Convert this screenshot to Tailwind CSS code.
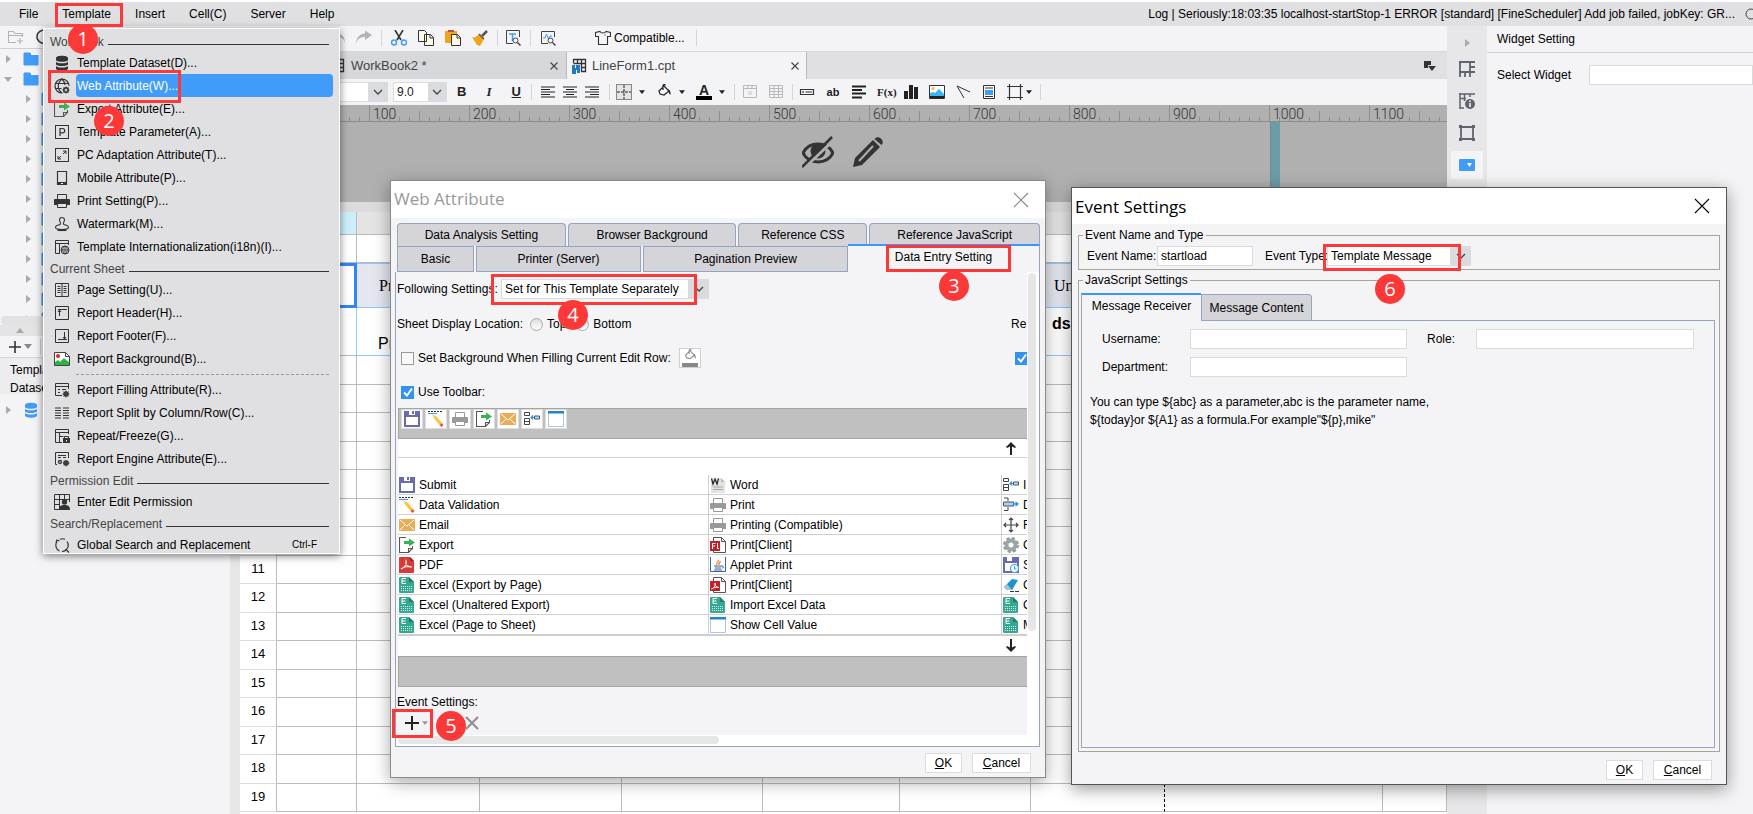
<!DOCTYPE html>
<html lang="en">
<head>
    <meta charset="UTF-8">
    <meta name="viewport" content="width=device-width, initial-scale=1.0">
    <title>Report Designer</title>
    <script src="https://cdn.jsdelivr.net/npm/@tailwindcss/browser@4"></script>
</head>
<body class="relative flex h-screen flex-col overflow-hidden bg-[#f4f4f6] font-['Liberation_Sans',Arial,sans-serif] text-xs text-black">

    <!-- Icon sprite -->
    <svg class="hidden" xmlns="http://www.w3.org/2000/svg">
        <symbol id="tri-right" viewBox="0 0 6 8"><path d="M1 0l5 4-5 4z" fill="#aaa"/></symbol>
        <symbol id="tri-down" viewBox="0 0 8 5"><path d="M0 0h8L4 5z" fill="currentColor"/></symbol>
        <symbol id="chevron" viewBox="0 0 10 6"><path d="M1 1l4 4 4-4" fill="none" stroke="#444" stroke-width="1.3"/></symbol>
        <symbol id="close" viewBox="0 0 16 16"><path d="M1 1l14 14M15 1L1 15" fill="none" stroke="currentColor" stroke-width="1.1"/></symbol>
        <symbol id="close-sm" viewBox="0 0 8 8"><path d="M.5.5l7 7M7.500.5l-7 7" fill="none" stroke="#444" stroke-width="1.1"/></symbol>
        <symbol id="folder" viewBox="0 0 16 14"><path d="M1 1h6l2 2h6v10H1z" fill="#419bf9" stroke="#419bf9" stroke-linejoin="round"/><path d="M8 2.500h7" stroke="#fff"/></symbol>
        <symbol id="db" viewBox="0 0 16 16"><path d="M2 3c0-3 12-3 12 0v2c0 2.400-12 2.400-12 0zM2 6.800c2 2 10 2 12 0v2.400c0 2.400-12 2.400-12 0zM2 11c2 2 10 2 12 0v2.400c0 3-12 3-12 0z" fill="currentColor"/></symbol>
        <symbol id="globe-gear" viewBox="0 0 16 16"><g fill="none" stroke="#333" stroke-width="1.200"><path d="M8.500 15A7 7 0 1 1 15 8M8 1c-5 4-5 10 0 14M8 1c2 2 3 4 3 6M1.500 5.500h13M1.500 10.500h6"/><circle cx="12" cy="12" r="2.300" stroke-width="1.500"/><path d="M12 8.300v7.400M8.300 12h7.400M9.500 9.500l5 5M14.500 9.500l-5 5" stroke-width=".8"/></g><circle cx="12" cy="12" r="1.100" fill="#e0e0e2"/></symbol>
        <symbol id="export" viewBox="0 0 16 16"><path d="M7 .5H.5v15h9l4-4V9M9.500 15.500v-4h4" fill="none" stroke="#555" stroke-width="1.100"/><path d="M5 4h5V1.500l6 4-6 4V7H5z" fill="#3cb054"/></symbol>
        <symbol id="param" viewBox="0 0 16 16"><rect x="1.500" y="1.500" width="13" height="13" fill="none" stroke="#333"/><path d="M6 12V4.500h2.500a2.200 2.200 0 0 1 0 4.400H6" fill="none" stroke="#333" stroke-width="1.200"/></symbol>
        <symbol id="adapt" viewBox="0 0 16 16"><rect x="1.500" y="1.500" width="13" height="13" fill="none" stroke="#333"/><path d="M9 4h3v3M12 4L9 7M4 9v3h3M4 12l3-3" fill="none" stroke="#333"/></symbol>
        <symbol id="mobile" viewBox="0 0 16 16"><path d="M3.500 1.500h9v13h-9z" fill="none" stroke="#333" stroke-width="1.200"/><path d="M3 12h10v3H3z" fill="#333"/><path d="M7 13.500h2" stroke="#fff"/></symbol>
        <symbol id="print" viewBox="0 0 16 16"><path d="M3.500 6V1.500h9V6M3.500 11v3.500h9V11" fill="none" stroke="currentColor"/><path d="M1 6h14a1 1 0 0 1 1 1v5h-3v-1H3v1H0V7a1 1 0 0 1 1-1z" fill="currentColor"/></symbol>
        <symbol id="stamp" viewBox="0 0 16 16"><g fill="none" stroke="#333" stroke-width="1.100"><path d="M6.500 8.500C7 6.500 5.500 5.500 5.500 4a2.500 2.500 0 0 1 5 0c0 1.500-1.500 2.500-1 4.500"/><path d="M6.500 8.500C3 9 1.500 10 1.500 11.500c0 1.300 3 2 6.500 2s6.500-.7 6.500-2c0-1.500-1.500-2.500-5-3"/><path d="M3.500 14.500h9"/></g></symbol>
        <symbol id="i18n" viewBox="0 0 16 16"><g fill="none" stroke="#333"><path d="M6 14.500H1.500v-13h13V6M1.500 4.500h13M5.500 4.500v10"/><circle cx="11" cy="11" r="4"/><path d="M7 11h8M11 7v8M11 7c-3 2-3 6 0 8M11 7c3 2 3 6 0 8" stroke-width=".8"/></g></symbol>
        <symbol id="page" viewBox="0 0 16 16"><path d="M1.500 1.500h13v13h-13zM8 2v12M3.500 4.500h3M3.500 6.500h3M3.500 8.500h3M3.500 10.500h3M9.500 4.500h3M9.500 6.500h3M9.500 8.500h3M9.500 10.500h3" fill="none" stroke="#333"/></symbol>
        <symbol id="head" viewBox="0 0 16 16"><path d="M1.500 1.500h13v13h-13zM4 4.500h9M5.500 5v6M4 7l1.500-2L7 7" fill="none" stroke="#333"/></symbol>
        <symbol id="foot" viewBox="0 0 16 16"><path d="M1.500 1.500h13v13h-13zM4 11.500h9M10.500 4v7M9 9l1.500 2L12 9" fill="none" stroke="#333"/></symbol>
        <symbol id="bgimg" viewBox="0 0 16 16"><path d="M.5 1.500h11l4 4v9H.5z" fill="#fff" stroke="#444"/><path d="M1 14v-3l3-2 2 2 4-4 2 2 3 2v3z" fill="#2fb344"/><circle cx="4" cy="5" r="2" fill="#e22"/><path d="M11.500 1.500v4h4" fill="none" stroke="#444"/></symbol>
        <symbol id="fill-attr" viewBox="0 0 16 16"><g fill="none" stroke="#333"><path d="M8 13.500H1.500v-12h13V7M1.500 4.500h13M4 7.500h2M8 7.500h4M4 10.500h2"/><circle cx="12" cy="12" r="2" stroke-width="1.500"/><path d="M12 8.500v7M8.500 12h7M9.500 9.500l5 5M14.500 9.500l-5 5" stroke-width=".8"/></g></symbol>
        <symbol id="split" viewBox="0 0 16 16"><path d="M1 3h6M1 5.500h6M1 8h6M1 10.500h6M1 13h6M9 3h6M9 5.500h6M9 8h6M9 10.500h6M9 13h6" stroke="#333" stroke-width="1.100"/></symbol>
        <symbol id="freeze" viewBox="0 0 16 16"><path d="M8 14.500H1.500v-13h13V6M1.500 4.500h13M5.500 4.500v10M5.500 8.500h4" fill="none" stroke="#333"/><path d="M9 10h7v5H9z" fill="#333"/><path d="M10.500 10V8.500h4V10" fill="none" stroke="#333"/><path d="M12 12h1v1.500h-1z" fill="#fff"/></symbol>
        <symbol id="engine" viewBox="0 0 16 16"><g fill="none" stroke="#333"><path d="M3 13.500H1.500v-12h13V7M4 4.500h8M4 6.500h3M9 6.500h3"/><circle cx="6" cy="11" r="1.500" stroke-width="1.300"/><circle cx="12" cy="12" r="2" stroke-width="1.500"/><path d="M12 9v6.500M8.800 12h6.700M9.800 9.800l4.500 4.500M14.300 9.800l-4.500 4.500" stroke-width=".8"/></g></symbol>
        <symbol id="perm" viewBox="0 0 16 16"><path d="M5 15.500H.5V.5h15V8M.5 5.500h15M.5 10.500H6M5.500.5v15M10.500.5v5" fill="none" stroke="#333"/><circle cx="10.500" cy="8" r="2.700" fill="#333"/><path d="M5 16c0-4 2-5 5.500-5S16 12 16 16z" fill="#333"/></symbol>
        <symbol id="search-rep" viewBox="0 0 16 16"><path d="M5.500 14A6.300 6.300 0 0 1 3 4.500M6 2.300a6.300 6.300 0 0 1 5 0M13 4.500a6.300 6.300 0 0 1-1 8.500 6.300 6.300 0 0 1-4 1.500M2 5.500l1-2.500 2.500 1M11.500 12l3.500 3.500" fill="none" stroke="#333" stroke-width="1.200"/></symbol>
        <symbol id="bucket" viewBox="0 0 16 16"><path d="M3 7l5-5 5 5-5 4-4-1zM7 6V1.500a1.300 1.300 0 0 1 2.500 0" fill="none" stroke="currentColor" stroke-width="1.200"/><path d="M12 5c2 1 3 3 2.500 6-1-1-2-2-2-4z" fill="currentColor"/></symbol>
        <symbol id="save" viewBox="0 0 16 16"><path d="M0 0h16v16H0z" fill="#6a6aae"/><path d="M2 6h12v8H2z" fill="#fff"/><path d="M5 0h6v4H5z" fill="#fff"/><path d="M8 0h2v3H8z" fill="#6a6aae"/></symbol>
        <symbol id="save-clock" viewBox="0 0 16 16"><path d="M0 0h16v16H0z" fill="#6a6aae"/><path d="M2 6h12v8H2zM4 0h5v4H4z" fill="#fff"/><circle cx="11.500" cy="11.500" r="4" fill="#fff" stroke="#419bf9" stroke-width="1.200"/><path d="M11.500 9v3h2" fill="none" stroke="#419bf9"/></symbol>
        <symbol id="validate" viewBox="0 0 16 16"><path d="M0 .5h15" stroke="#333" stroke-dasharray="2 1"/><path d="M0 2.500h9" stroke="#419bf9"/><path d="M5 6l2.500-1.500L14 12l-2.500 2z" fill="#fdc33c"/><path d="M4 3l3.500 1.500L5 6.500z" fill="#f0d9b0"/><path d="M11.500 14l2.500-2 1.500 2-2 2z" fill="#e8503a"/></symbol>
        <symbol id="mail" viewBox="0 0 16 16"><rect y="2" width="16" height="12" rx="1" fill="#eaad55"/><path d="M1 3l7 6 7-6M1 13l5-5M15 13l-5-5" fill="none" stroke="#fff"/></symbol>
        <symbol id="insert" viewBox="0 0 16 16"><path d="M.5 1.500h5v3h-5zM.5 7.500h5v6h-5zM.5 10.500h5" fill="#fff" stroke="#444"/><path d="M7 6.500h4M9 4.500L7 6.500l2 2" fill="none" stroke="#2f8ff0" stroke-width="1.200"/><path d="M10.500 5h5v3h-5z" fill="#bfe0f8" stroke="#456"/></symbol>
        <symbol id="delete" viewBox="0 0 16 16"><path d="M1 1h4v3M1 13.500h4V10" fill="none" stroke="#444"/><path d="M.5 5h10v4H.5z" fill="#a9d3f2" stroke="#456"/><path d="M10 7h5M12.500 5l2.500 2-2.500 2" fill="none" stroke="#2f8ff0" stroke-width="1.300"/></symbol>
        <symbol id="window" viewBox="0 0 16 16"><path d="M.5.5h15v15H.5z" fill="#fff" stroke="#a9c6e2"/><path d="M0 0h16v2.500H0z" fill="#1d86c8"/></symbol>
        <symbol id="pdf" viewBox="0 0 16 16"><path d="M0 1a1 1 0 0 1 1-1h10l4 4v11a1 1 0 0 1-1 1H0z" fill="#d83b35"/><path d="M11 0v4h4z" fill="#a52520"/><path d="M2 12c4-2 6-5 5-8-1 4 2 6 6 6-4-1-8 0-11 2z" fill="none" stroke="#fff" stroke-width="1.100"/></symbol>
        <symbol id="excel" viewBox="0 0 16 16"><path d="M0 1a1 1 0 0 1 1-1h9l5 5v10a1 1 0 0 1-1 1H1a1 1 0 0 1-1-1z" fill="#35a98f"/><path d="M10 0v5h5z" fill="#237e69"/><path d="M7 1.500H3v5h4M3 4h3.500" fill="none" stroke="#fff"/><path d="M2 9.500h11M2 11.500h11M2 13.500h11" stroke="#fff" stroke-opacity=".8" stroke-dasharray="1 1"/></symbol>
        <symbol id="word" viewBox="0 0 16 16"><path d="M1 1h10l4 4v11H1z" fill="#e2e2e2"/><path d="M11 1v4h4z" fill="#bbb"/><path d="M1.500 1.500L3 7l2-5 2 5 1.500-5.500" fill="none" stroke="#222" stroke-width="1.200"/><path d="M3 10h10M3 12.500h10" stroke="#aaa"/></symbol>
        <symbol id="flash" viewBox="0 0 16 16"><path d="M3.500 4V.5h8l4 4v11h-12V13M11.500.5v4h4" fill="#fff" stroke="#555"/><path d="M0 4h10v10H0z" fill="#c62127"/><path d="M5.500 6.500H2.500V12M2.500 9H5M7.500 6v5.500H9" fill="none" stroke="#fff"/></symbol>
        <symbol id="pdf-print" viewBox="0 0 16 16"><path d="M3.500 4V.5h8l4 4v11h-12V13M11.500.5v4h4" fill="#fff" stroke="#555"/><path d="M0 4h10v10H0z" fill="#c62127"/><path d="M1.500 12c3-1 4-3 3.500-6 0 3 1 4 4 4.500-3-.5-5 0-7.500 1.500z" fill="none" stroke="#fff" stroke-width=".9"/></symbol>
        <symbol id="java" viewBox="0 0 16 16"><path d="M.5 0v14.500h15V0" fill="none" stroke="#35639a"/><path d="M7 8c-2-2 3-3 1-5M9 8c-1-2 2-2 1-4" fill="none" stroke="#ef7d22" stroke-width="1.200"/><path d="M4 9h8M5 11h6M4 13h8M12 9c2 0 2 2 0 2" fill="none" stroke="#35639a"/></symbol>
        <symbol id="move" viewBox="0 0 16 16"><path d="M8 1v14M1 8h14M6 3l2-2 2 2M6 13l2 2 2-2M3 6L1 8l2 2M13 6l2 2-2 2" fill="none" stroke="#444" stroke-width="1.200"/></symbol>
        <symbol id="gear" viewBox="0 0 16 16"><circle cx="8" cy="8" r="6.500" fill="none" stroke="#8e9b98" stroke-width="3" stroke-dasharray="3 2.100"/><circle cx="8" cy="8" r="4.500" fill="#fff" stroke="#9aa6a3" stroke-width="4"/></symbol>
        <symbol id="eraser" viewBox="0 0 16 16"><path d="M1 10l8-8 6 1-6 10H4z" fill="#1f93d0"/><path d="M1 10l3-3 5 6H4z" fill="#a6c3d5"/><path d="M7 14.500h9" stroke="#333" stroke-dasharray="4 1"/></symbol>
        <symbol id="book" viewBox="0 0 16 16"><path d="M1.500 1.500h12v12h-12zM1.500 5.500h12M5.500 1.500v12M9.500 1.500v12M1.500 9.500h12" fill="none" stroke="#333" stroke-width="1.300"/></symbol>
        <symbol id="align-l" viewBox="0 0 14 12"><path d="M0 1h14M0 3.500h9M0 6h14M0 8.500h9M0 11h14" stroke="#222" stroke-width="1.200"/></symbol>
        <symbol id="align-c" viewBox="0 0 14 12"><path d="M0 1h14M3 3.500h8M0 6h14M3 8.500h8M0 11h14" stroke="#222" stroke-width="1.200"/></symbol>
        <symbol id="align-r" viewBox="0 0 14 12"><path d="M0 1h14M5 3.500h9M0 6h14M5 8.500h9M0 11h14" stroke="#222" stroke-width="1.200"/></symbol>
    </svg>

    <!-- Menu bar -->
    <header class="flex h-[26px] shrink-0 items-center border-t-2 border-white bg-[#e0e0e2] pl-[19px]">
        <nav class="flex gap-6">
            <button>File</button>
            <button>Template</button>
            <button>Insert</button>
            <button>Cell(C)</button>
            <button>Server</button>
            <button>Help</button>
        </nav>
        <p class="ml-auto whitespace-nowrap">Log | Seriously:18:03:35 localhost-startStop-1 ERROR [standard] [FineScheduler] Add job failed, jobKey: GR...</p>
        <svg class="ml-2.5 h-3 w-2 shrink-0" viewBox="0 0 8 12"><circle cx="6" cy="6" r="5" fill="none" stroke="#444"/></svg>
    </header>

    <div class="flex min-h-0 flex-1">
        <!-- Template tree and datasets -->
        <aside class="flex w-[230px] shrink-0 flex-col">
            <div class="flex h-[23px] shrink-0 items-center gap-3 border-b border-[#d0d0d4] pl-2">
                <svg class="size-4" viewBox="0 0 16 16"><path d="M8 13.500H.5v-11h5l1.500 2h7.500V8M1 6.500h13M12 9v6M9 12h6" fill="none" stroke="#b4b4b6" stroke-width="1.200"/></svg>
                <svg class="size-4" viewBox="0 0 16 16"><path d="M12 3a6.500 6.500 0 1 0 2 5" fill="none" stroke="#333" stroke-width="1.500"/></svg>
            </div>
            <ul id="tree" class="h-[267px] shrink-0 overflow-hidden"></ul>
            <div class="mx-px h-[9px] shrink-0 rounded bg-[#e2e2e2]"></div>
            <div class="flex h-[11px] shrink-0 items-center bg-[#e4e4e6] pl-4"><svg class="h-[5px] w-2 rotate-180 text-[#aaa]"><use href="#tri-down"/></svg></div>
            <div class="flex h-[22px] shrink-0 items-center border-b border-[#d4d4d8] pl-2">
                <button aria-label="Add dataset" class="flex items-center gap-0.5"><svg class="size-3.5" viewBox="0 0 14 14"><path d="M7 1v12M1 7h12" stroke="#333" stroke-width="1.600"/></svg><svg class="h-[5px] w-2 text-[#888]"><use href="#tri-down"/></svg></button>
                <span class="ml-2 h-4 w-px bg-[#ccc]"></span>
            </div>
            <p class="h-[36px] shrink-0 bg-[#ededf0] pt-[3px] pl-2.5 leading-[18px]">Template<br>Dataset</p>
            <div class="mt-2 flex items-center gap-3.5 pl-[5px]"><svg class="h-2 w-1.5"><use href="#tri-right"/></svg><svg class="-ml-0.5 size-4 text-[#419bf9]"><use href="#db"/></svg></div>
        </aside>

        <main class="flex min-w-0 flex-1 flex-col">
            <!-- Edit toolbar -->
            <div class="flex h-[25px] shrink-0 items-center gap-[11px] pb-0.5 pl-[99px]">
                <svg class="size-4" viewBox="0 0 16 16"><path d="M16 13c-1-5-4-6-8-6v3L1 5.500 8 1v3c5 0 8 3 8 9z" fill="#b4b4b6"/></svg>
                <svg class="size-4" viewBox="0 0 16 16"><path d="M0 14c1-5 4-7 9-7v3l7-5-7-4.500v3C3 4 0 8 0 14z" fill="#b4b4b6"/></svg>
                <span class="-ml-0.5 h-4 w-px bg-[#d4d4d8]"></span>
                <svg class="-ml-0.5 size-4" viewBox="0 0 16 16"><path d="M4 0l6 10M12 0L6 10" stroke="#333" stroke-width="1.600"/><circle cx="3" cy="12.500" r="2.500" fill="none" stroke="#419bf9" stroke-width="1.500"/><circle cx="13" cy="12.500" r="2.500" fill="none" stroke="#419bf9" stroke-width="1.500"/></svg>
                <svg class="size-4" viewBox="0 0 16 16"><path d="M.5.5h6l2 2v9h-8zM6.500 4.500h6l3 3v8h-9zM12 4.500v3.500h3.500" fill="#fff8e8" stroke="#333"/></svg>
                <svg class="size-4" viewBox="0 0 16 16"><path d="M0 1h12v12H0z" fill="#f2a31b"/><path d="M3 0h6v2H3z" fill="#a55"/><path d="M6.500 4.500h6l3 3v8h-9zM12 4.500v3.500h3.500" fill="#fff8e8" stroke="#333"/></svg>
                <svg class="size-4" viewBox="0 0 16 16"><path d="M15 1l-5 5" stroke="#555" stroke-width="2.500"/><path d="M7 4l5 5-4 7-3-1-5-8c3 1 4 0 7-3z" fill="#f2a31b"/><path d="M7 4l5 5" stroke="#555" stroke-width="1.500"/></svg>
                <span class="-ml-0.5 h-4 w-px bg-[#d4d4d8]"></span>
                <svg class="-ml-1 size-4" viewBox="0 0 16 16"><path d="M8 13.500H1.500v-13h13V7" fill="none" stroke="#444"/><path d="M4 4h7M7.500 4v7" stroke="#419bf9" stroke-width="1.500"/><circle cx="10.500" cy="10.500" r="2.500" fill="none" stroke="#444"/><path d="M12.500 12.500l3 3" stroke="#444" stroke-width="1.500"/></svg>
                <span class="-ml-0.5 h-4 w-px bg-[#d4d4d8]"></span>
                <svg class="-ml-0.5 size-4" viewBox="0 0 16 16"><path d="M8 13.500H1.500v-12h13V7" fill="none" stroke="#444"/><path d="M3 8h2l1.500-4 2 5L10 6h2" fill="none" stroke="#419bf9"/><circle cx="10.500" cy="10.500" r="2.500" fill="none" stroke="#444"/><path d="M12.500 12.500l3 3" stroke="#444" stroke-width="1.500"/></svg>
                <button class="ml-7 flex items-center gap-[3px]"><svg class="size-4" viewBox="0 0 16 16"><path d="M5 1.500c1 2 5 2 6 0l4.500 1v4h-3v8h-9v-8h-3v-4z" fill="none" stroke="#333" stroke-width="1.100"/><path d="M9 5h2" stroke="#419bf9"/></svg>Compatible...</button>
                <span class="h-4 w-px bg-[#d4d4d8]"></span>
            </div>

            <!-- Open files -->
            <div class="flex h-7 shrink-0 border-t border-[#d8d8da] bg-[#e0e0e2] text-[13px] text-[#444]">
                <div class="flex w-[337px] shrink-0 items-center border-r border-[#bbb] bg-[#d7d8dc] pr-2 pl-[100px]"><svg class="mr-[5px] size-4"><use href="#book"/></svg>WorkBook2 *<button aria-label="Close WorkBook2" class="ml-auto"><svg class="size-2"><use href="#close-sm"/></svg></button></div>
                <div class="flex w-[240px] shrink-0 items-center border-r border-[#bbb] bg-[#f4f4f7] pr-[7px] pl-[5px]"><svg class="mr-1 size-4" viewBox="0 0 16 16"><path d="M1.500 5V1.500h12v12H9M1.500 5.500h12M5.500 1.500v4M9.500 1.500v12M9 9.500h4.500" fill="none" stroke="#333" stroke-width="1.300"/><path d="M0 7h3v3h1V7h4v8H5v-3H4v4H0z" fill="#2379be"/></svg>LineForm1.cpt<button aria-label="Close LineForm1" class="ml-auto"><svg class="size-2"><use href="#close-sm"/></svg></button></div>
                <button aria-label="Open files" class="mr-[11px] ml-auto"><svg class="size-3" viewBox="0 0 12 12"><path d="M0 1h7v4H4v3H0z" fill="#333"/><path d="M4 6h8L8 11z" fill="#333"/></svg></button>
            </div>

            <!-- Format toolbar -->
            <div class="flex h-[26px] shrink-0 items-center text-[#222]">
                <div class="relative flex h-5 w-[158px] shrink-0 items-center bg-[#dadbdf]"><select aria-label="Font" class="h-5 w-[139px] appearance-none border border-[#dadbdf] bg-white"><option></option></select><svg class="pointer-events-none absolute right-[5px] h-1.5 w-2.5"><use href="#chevron"/></svg></div>
                <div class="relative ml-[5px] flex h-5 w-[54px] shrink-0 items-center bg-[#dadbdf]"><select aria-label="Font size" class="h-5 w-[36px] appearance-none border border-[#dadbdf] bg-white pl-[3px]"><option>9.0</option></select><svg class="pointer-events-none absolute right-[5px] h-1.5 w-2.5"><use href="#chevron"/></svg></div>
                <div class="flex w-[84px] shrink-0 items-center justify-around text-[13px]"><button class="font-bold">B</button><button class="font-['Liberation_Serif',serif] font-bold italic">I</button><button class="font-bold underline">U</button></div>
                <span class="h-4 w-px bg-[#d4d4d8]"></span>
                <div class="ml-[9px] flex gap-2"><svg class="h-3 w-3.5"><use href="#align-l"/></svg><svg class="h-3 w-3.5"><use href="#align-c"/></svg><svg class="h-3 w-3.5"><use href="#align-r"/></svg></div>
                <span class="ml-2.5 h-4 w-px bg-[#d4d4d8]"></span>
                <div class="ml-1.5 flex items-center gap-[7px]">
                    <svg class="size-4" viewBox="0 0 16 16"><path d="M.5.5h15v15H.5z" fill="#e4e4e4" stroke="#222" stroke-dasharray="1 1"/><path d="M8 1v14M1 8h14" stroke="#222" stroke-dasharray="3 1"/></svg>
                    <svg class="h-1 w-1.5"><use href="#tri-down"/></svg>
                    <svg class="ml-1 size-4"><use href="#bucket"/></svg>
                    <svg class="h-1 w-1.5"><use href="#tri-down"/></svg>
                    <span class="ml-1 flex h-4 w-4 items-start justify-center border-b-4 border-black text-sm leading-3 font-bold">A</span>
                    <svg class="h-1 w-1.5"><use href="#tri-down"/></svg>
                </div>
                <span class="ml-[9px] h-4 w-px bg-[#d4d4d8]"></span>
                <div class="ml-2 flex gap-3"><svg class="size-3.5" viewBox="0 0 14 14"><path d="M.5.5h13v12H.5zM.5 3.500h13M5 .5v3M9 .5v3" fill="none" stroke="#b8b8ba"/><path d="M5 6h4v4H5z" fill="#ddd"/></svg><svg class="size-3.5" viewBox="0 0 14 14"><path d="M.5.5h13v12H.5zM.5 3.500h13M.5 6.500h13M.5 9.500h13M5 .5v12M9.500.5v12" fill="none" stroke="#b8b8ba"/></svg></div>
                <span class="ml-[9px] h-4 w-px bg-[#d4d4d8]"></span>
                <div class="ml-1.5 flex shrink-0 items-center gap-2.5">
                    <svg class="size-4" viewBox="0 0 16 16"><path d="M1.500 5.500h13v5h-13zM4 7v2M6.500 8H13" fill="none" stroke="#333" stroke-width="1.200"/></svg>
                    <span class="w-4 text-center text-[11px] font-bold">ab</span>
                    <svg class="size-4" viewBox="0 0 16 16"><path d="M1 2.500h14M1 6h10M1 9.500h14M1 13.500h10" stroke="#222" stroke-width="2"/></svg>
                    <span class="w-4 text-center font-['Liberation_Serif',serif] text-[11px] font-bold">F(x)</span>
                    <svg class="size-4" viewBox="0 0 16 16"><path d="M1 7h4v8H1zM6 1h4v14H6zM11 3h4v12h-4z" fill="#222"/></svg>
                    <svg class="size-4" viewBox="0 0 16 16"><path d="M.5 1.500h15v13H.5z" fill="#fff" stroke="#333"/><path d="M1 12V9l3-1 2 1 4-4 2 2 3 3v2z" fill="#36b6f2"/><path d="M1 12h14v2.500H1z" fill="#222"/><circle cx="4" cy="4.500" r="1.500" fill="#f6bf3a"/></svg>
                    <svg class="size-4" viewBox="0 0 16 16"><path d="M9 14L2 2l13 6" fill="none" stroke="#333"/></svg>
                    <svg class="size-4" viewBox="0 0 16 16"><path d="M2.500 1.500h11v13h-11z" fill="#fff" stroke="#333"/><path d="M4 4h8M4 12.500h8" stroke="#333"/><path d="M4 6h8v5H4z" fill="#419bf9"/></svg>
                    <svg class="size-4" viewBox="0 0 16 16"><path d="M2.500 0v16M13.500 0v16M0 2.500h16M0 13.500h16" stroke="#333" stroke-width="1.200"/></svg>
                </div>
                <svg class="ml-[3px] h-1 w-1.5"><use href="#tri-down"/></svg>
                <span class="ml-2 h-4 w-px bg-[#d4d4d8]"></span>
            </div>

            <!-- Ruler -->
            <div class="relative flex h-[17px] shrink-0 overflow-hidden border-b border-[#8c8c8c] bg-[#b0b0b0] pl-[43px] font-['Roboto',sans-serif] text-[14px] leading-[19px] font-light text-[#333]">
                <svg class="absolute inset-0 h-full w-full">
                    <pattern id="ticks" x="39" width="100" height="17" patternUnits="userSpaceOnUse"><path d="M.5 0v17M50.500 6v11M10.500 12v5M20.500 12v5M30.500 12v5M40.500 12v5M60.500 12v5M70.500 12v5M80.500 12v5M90.500 12v5" stroke="#8e8e8e"/></pattern>
                    <rect width="100%" height="17" fill="url(#ticks)"/>
                </svg>
                <span class="w-[100px] shrink-0">0</span><span class="w-[100px] shrink-0">100</span><span class="w-[100px] shrink-0">200</span><span class="w-[100px] shrink-0">300</span><span class="w-[100px] shrink-0">400</span><span class="w-[100px] shrink-0">500</span><span class="w-[100px] shrink-0">600</span><span class="w-[100px] shrink-0">700</span><span class="w-[100px] shrink-0">800</span><span class="w-[100px] shrink-0">900</span><span class="w-[100px] shrink-0">1000</span><span class="w-[100px] shrink-0">1100</span>
            </div>

            <!-- Parameter pane -->
            <div class="flex h-20 shrink-0 justify-between bg-[#b0b0b0] pl-[572px]">
                <div class="flex gap-[18px] pt-[14px]">
                    <svg class="size-8" viewBox="0 0 32 32"><path d="M1 17C7 5 25 5 31 17 25 29 7 29 1 17z" fill="none" stroke="#333" stroke-width="3"/><circle cx="16" cy="15" r="7.500" fill="#333"/><path d="M1 33L33 3" stroke="#b0b0b0" stroke-width="3"/><path d="M0 31L30 1" stroke="#333" stroke-width="2.500"/></svg>
                    <svg class="size-8" viewBox="0 0 32 32"><path d="M1 31l2-9L21 4l7 7-18 18z" fill="#333"/><path d="M22.500 3c4-5 11 2 7 6z" fill="#333"/><path d="M7 25L21 10" stroke="#b0b0b0" stroke-width="2"/></svg>
                </div>
                <div class="mr-[167px] w-2.5 border-l border-[#6b8d95] bg-[#6c9ca8]"></div>
            </div>
            <div class="h-2.5 shrink-0 bg-[#dcdcdf]"></div>

            <!-- Sheet -->
            <div class="min-h-0 flex-1 overflow-hidden border-l-10 border-[#e6e6e6] bg-white">
                <table class="w-full table-fixed border-separate border-spacing-0 text-center">
                    <colgroup><col class="w-[37px]"><col class="w-20"><col class="w-[123px]"><col class="w-[142px]"><col class="w-[141px]"><col class="w-[137px]"><col class="w-[131px]"><col class="w-[134px]"><col class="w-[218px]"><col></colgroup>
                    <tbody id="sheet"></tbody>
                </table>
            </div>
        </main>

        <!-- Side rail -->
        <div class="flex w-10 shrink-0 flex-col items-center bg-[#e7e7e9] pt-[13px]">
            <svg class="h-2 w-1.5"><use href="#tri-right"/></svg>
            <svg class="mt-3.5 size-4" viewBox="0 0 16 16"><path d="M1 0v16M0 1h16M11 0v11M0 11h16M6 11v5M11 11v5M11 6h5" fill="none" stroke="#5f6470" stroke-width="1.800"/></svg>
            <svg class="mt-4 size-4" viewBox="0 0 16 16"><path d="M1 0v16M0 1h16M5.500 1v7M1 5.500h6M11 1v3M1 15h4" fill="none" stroke="#5f6470" stroke-width="1.500"/><circle cx="11" cy="11" r="5" fill="#5f6470"/><path d="M11 7.500v1.500M11 10v4" stroke="#fff" stroke-width="1.500"/></svg>
            <svg class="mt-4 size-4" viewBox="0 0 16 16"><path d="M2 2h12v12H2z" fill="none" stroke="#5f6470" stroke-width="1.800"/><path d="M0 0h3v3H0zM13 0h3v3h-3zM0 13h3v3H0zM13 13h3v3h-3z" fill="#5f6470"/></svg>
            <button aria-label="Widget" class="mt-2.5 flex h-7 w-8 items-center justify-center bg-[#f4f4f6]"><svg class="h-3 w-4" viewBox="0 0 16 12"><rect width="16" height="12" rx="1" fill="#419bf9"/><path d="M8 4h5l-2.500 4z" fill="#fff"/></svg></button>
        </div>

        <!-- Widget settings -->
        <section class="w-[266px] shrink-0">
            <h2 class="h-[27px] border-b border-[#d2d2d5] pl-2.5 leading-[26px]">Widget Setting</h2>
            <div class="mt-3 flex items-center pl-2.5">
                <label for="widget" class="w-[92px]">Select Widget</label>
                <input id="widget" class="h-5 min-w-0 flex-1 border border-[#dadadd] bg-white">
            </div>
        </section>
    </div>

    <!-- Web Attribute dialog -->
    <div role="dialog" aria-label="Web Attribute" class="absolute top-[180px] left-[390px] flex h-[598px] w-[656px] flex-col border border-[#8a8a8a] bg-[#f4f4f6] shadow-[0_4px_16px_rgba(0,0,0,0.35)]">
        <div class="flex h-[37px] shrink-0 items-center justify-between bg-white pr-4 pl-[3px]">
            <h1 class="font-['Open_Sans',sans-serif] text-[17px] text-[#999]">Web Attribute</h1>
            <button aria-label="Close" class="text-[#888]"><svg class="size-4"><use href="#close"/></svg></button>
        </div>
        <div class="mt-[5px] mr-[5px] ml-1.5 grid h-[23px] shrink-0 grid-cols-[169fr_169fr_129fr_171fr] gap-0.5">
            <button class="rounded-t-sm border border-b-0 border-[#93a5bf] bg-[#d4d4d9]">Data Analysis Setting</button>
            <button class="rounded-t-sm border border-b-0 border-[#93a5bf] bg-[#d4d4d9]">Browser Background</button>
            <button class="rounded-t-sm border border-b-0 border-[#93a5bf] bg-[#d4d4d9]">Reference CSS</button>
            <button class="rounded-t-sm border border-b-0 border-[#93a5bf] bg-[#d4d4d9]">Reference JavaScript</button>
        </div>
        <div class="mr-[5px] ml-1.5 flex h-[26px] shrink-0 items-end">
            <button class="mr-0.5 h-[26px] w-[77px] border border-[#93a5bf] bg-[#d4d4d9]">Basic</button>
            <button class="mr-0.5 h-[26px] w-[165px] border border-[#93a5bf] bg-[#d4d4d9]">Printer (Server)</button>
            <button class="h-[26px] w-[205px] border border-[#93a5bf] bg-[#d4d4d9]">Pagination Preview</button>
            <button class="h-7 flex-1 border-t-2 border-r border-t-[#3d96fb] border-r-[#93a5bf] bg-[#f4f4f6] pb-1">Data Entry Setting</button>
        </div>
        <div class="mr-[5px] ml-1 flex h-[475px] shrink-0 border-x border-b border-[#93a5bf] bg-white">
            <div class="flex min-w-0 flex-1 flex-col">
                <div class="h-[463px] overflow-hidden bg-[#f4f4f6] pl-px whitespace-nowrap">
                    <div class="mt-[7px] flex h-5 items-center">
                        <label for="following" class="w-[104px]">Following Settings:</label>
                        <div class="relative flex h-5 w-[208px] items-center bg-[#dadbdf]">
                            <select id="following" class="h-5 w-[188px] appearance-none border border-[#dadbdf] bg-white pl-[3px]"><option>Set for This Template Separately</option></select>
                            <svg class="pointer-events-none absolute right-[5px] h-1.5 w-2.5"><use href="#chevron"/></svg>
                        </div>
                    </div>
                    <div class="mt-[15px] flex h-5 items-center">
                        <span class="w-[133px]">Sheet Display Location:</span>
                        <label class="flex items-center gap-1"><input type="radio" name="loc" class="size-[13px] appearance-none rounded-full border border-[#aaa] bg-linear-to-b from-[#ddd] to-white">Top</label>
                        <label class="ml-2.5 flex items-center gap-1"><input type="radio" name="loc" class="size-[13px] appearance-none rounded-full border border-[#aaa] bg-linear-to-b from-[#ddd] to-white">Bottom</label>
                        <span class="ml-auto w-4">Re</span>
                    </div>
                    <div class="mt-[14px] flex h-5 items-center pl-1">
                        <label class="flex w-[278px] items-center gap-1"><input type="checkbox" class="size-[13px] appearance-none border border-[#999] bg-[#f8f8f8]">Set Background When Filling Current Edit Row:</label>
                        <button aria-label="Background" class="flex h-5 w-[22px] flex-col items-center border border-[#d0d0d0] bg-white text-[#888]"><svg class="h-3.5 w-4 shrink-0"><use href="#bucket"/></svg><span class="h-1 w-4 bg-[#888]"></span></button>
                        <label class="ml-auto grid w-3 overflow-hidden"><input type="checkbox" checked aria-label="Reminder" class="col-start-1 row-start-1 size-[13px] appearance-none bg-[#3391f0]"><svg class="col-start-1 row-start-1 size-[13px]" viewBox="0 0 13 13"><path d="M3 6.500l3 3 5-7" fill="none" stroke="#fff" stroke-width="2"/></svg></label>
                    </div>
                    <div class="mt-[14px] flex h-5 items-center pl-1">
                        <label class="flex items-center gap-1"><span class="grid"><input type="checkbox" checked class="col-start-1 row-start-1 size-[13px] appearance-none bg-[#3391f0]"><svg class="col-start-1 row-start-1 size-[13px]" viewBox="0 0 13 13"><path d="M3 6.500l3 3 5-7" fill="none" stroke="#fff" stroke-width="2"/></svg></span>Use Toolbar:</label>
                    </div>
                    <div class="mt-1.5 ml-px flex h-[31px] gap-0.5 border border-r-0 border-[#a5a598] bg-[#c0c0c0] pl-0.5">
                        <button aria-label="Submit" class="flex h-5 w-[22px] items-center justify-center border border-[#ddd] bg-white"><svg class="size-4"><use href="#save"/></svg></button>
                        <button aria-label="Data Validation" class="flex h-5 w-[22px] items-center justify-center border border-[#ddd] bg-white"><svg class="size-4"><use href="#validate"/></svg></button>
                        <button aria-label="Print" class="flex h-5 w-[22px] items-center justify-center border border-[#ddd] bg-white text-[#999]"><svg class="size-4"><use href="#print"/></svg></button>
                        <button aria-label="Export" class="flex h-5 w-[22px] items-center justify-center border border-[#ddd] bg-white"><svg class="size-4"><use href="#export"/></svg></button>
                        <button aria-label="Email" class="flex h-5 w-[22px] items-center justify-center border border-[#ddd] bg-white"><svg class="size-4"><use href="#mail"/></svg></button>
                        <button aria-label="Insert" class="flex h-5 w-[22px] items-center justify-center border border-[#ddd] bg-white"><svg class="size-4"><use href="#insert"/></svg></button>
                        <button aria-label="Show Cell Value" class="flex h-5 w-[22px] items-center justify-center border border-[#ddd] bg-white"><svg class="size-4"><use href="#window"/></svg></button>
                    </div>
                    <div class="ml-px flex h-[19px] items-center justify-end border-b border-[#d0d0d0] bg-white pr-2.5"><svg class="h-3.5 w-3" viewBox="0 0 12 14"><path d="M6 2v12" stroke="#222" stroke-width="2"/><path d="M1 6l5-5 5 5-1 1-4-2-4 2z" fill="#222"/></svg></div>
                    <table class="ml-px w-full table-fixed border-separate border-spacing-0 border-b border-[#ccc] bg-white pt-[17px]">
                        <colgroup><col class="w-[311px]"><col class="w-[293px]"><col></colgroup>
                        <tbody id="tools"></tbody>
                    </table>
                    <div class="ml-px flex h-5 items-center justify-end bg-white pr-2.5"><svg class="h-3.5 w-3" viewBox="0 0 12 14"><path d="M6 0v12" stroke="#222" stroke-width="2"/><path d="M1 8l5 5 5-5-1-1-4 2-4-2z" fill="#222"/></svg></div>
                    <div class="ml-px h-[31px] border border-r-0 border-[#a5a598] bg-[#c0c0c0]"></div>
                    <p class="mt-[7px] leading-4">Event Settings:</p>
                    <div class="mt-[3px] flex h-5 items-center pl-2">
                        <button aria-label="Add event" class="flex items-center gap-[3px]"><svg class="size-3.5" viewBox="0 0 14 14"><path d="M7 0v14M0 7h14" stroke="#222" stroke-width="2"/></svg><svg class="h-1 w-1.5 text-[#999]"><use href="#tri-down"/></svg></button>
                        <button aria-label="Remove event" class="ml-[37px]"><svg class="size-3.5" viewBox="0 0 14 14"><path d="M1 1l12 12M13 1L1 13" stroke="#909090" stroke-width="2.200"/></svg></button>
                    </div>
                </div>
                <div class="mt-px ml-0.5 h-2 w-[321px] rounded bg-[#e6e6e6]"></div>
            </div>
            <div class="w-3 shrink-0 pt-px pl-px"><div class="h-[358px] w-2 rounded bg-[#e6e6e6]"></div></div>
        </div>
        <div class="mt-[6px] flex justify-end gap-2.5 pr-3.5">
            <button class="h-5 w-[37px] border border-[#dcdcdf] bg-white"><u>O</u>K</button>
            <button class="h-5 w-[59px] border border-[#dcdcdf] bg-white"><u>C</u>ancel</button>
        </div>
        <!-- Step markers -->
        <div class="absolute top-[64px] left-[495px] h-[27px] w-[125px] border-3 border-[#fc3838]"></div>
        <div class="absolute top-[90px] left-[548px] flex size-[30px] items-center justify-center rounded-full bg-[#fc3838] font-['Open_Sans',sans-serif] text-[20px] text-white">3</div>
        <div class="absolute top-[93px] left-[100px] h-[31px] w-[206px] border-3 border-[#fc3838]"></div>
        <div class="absolute top-[119px] left-[167px] flex size-[30px] items-center justify-center rounded-full bg-[#fc3838] font-['Open_Sans',sans-serif] text-[20px] text-white">4</div>
        <div class="absolute top-[528px] left-px h-[29px] w-[41px] border-3 border-[#fc3838]"></div>
        <div class="absolute top-[530px] left-[45px] flex size-[30px] items-center justify-center rounded-full bg-[#fc3838] font-['Open_Sans',sans-serif] text-[20px] text-white">5</div>
    </div>

    <!-- Event Settings dialog -->
    <div role="dialog" aria-label="Event Settings" class="absolute top-[187px] left-[1071px] flex h-[598px] w-[656px] flex-col border border-[#555] bg-[#f4f4f6] shadow-[0_4px_16px_rgba(0,0,0,0.4)]">
        <div class="flex h-[36px] shrink-0 items-center justify-between bg-white pr-4 pl-[3px]">
            <h1 class="pt-0.5 font-['Open_Sans',sans-serif] text-[17px]">Event Settings</h1>
            <button aria-label="Close"><svg class="size-4"><use href="#close"/></svg></button>
        </div>
        <fieldset class="mx-1.5 mt-[3px] h-[43px] shrink-0 border border-[#a5a598] pl-2">
            <legend class="-ml-1 px-0.5 leading-4">Event Name and Type</legend>
            <div class="mt-[3px] flex items-center whitespace-nowrap">
                <label for="ename" class="w-[70px]">Event Name:</label>
                <input id="ename" value="startload" class="h-5 w-24 border border-[#dadadd] bg-white px-[3px]">
                <label for="etype" class="ml-3 w-[62px]">Event Type:</label>
                <div class="relative flex h-5 w-[144px] items-center bg-[#dadbdf]">
                    <select id="etype" class="h-5 w-[124px] appearance-none border border-[#dadbdf] bg-white pl-[3px]"><option>Template Message</option></select>
                    <svg class="pointer-events-none absolute right-[5px] h-1.5 w-2.5"><use href="#chevron"/></svg>
                </div>
            </div>
        </fieldset>
        <fieldset class="mx-1.5 mt-0.5 h-[480px] shrink-0 border border-[#a5a598] px-0.5">
            <legend class="ml-0.5 px-0.5 leading-4">JavaScript Settings</legend>
            <div class="mt-[5px] flex h-[27px] items-end">
                <button class="z-10 -mb-px h-7 w-[120px] border-t-2 border-l border-t-[#3d96fb] border-l-[#93a5bf] bg-[#f4f4f6] pb-1">Message Receiver</button>
                <button class="h-[26px] w-[111px] rounded-tr-sm border border-b-0 border-[#93a5bf] bg-[#d4d4d9]">Message Content</button>
            </div>
            <div class="mr-[2px] h-[428px] border border-[#93a5bf]">
                <div class="mt-2 ml-5 grid grid-cols-[88px_217px_69px_218px] items-center gap-y-2">
                    <label for="uname">Username:</label><input id="uname" class="h-5 w-full border border-[#dadadd] bg-white">
                    <label for="role" class="pl-5">Role:</label><input id="role" class="h-5 w-full border border-[#dadadd] bg-white">
                    <label for="dept">Department:</label><input id="dept" class="h-5 w-full border border-[#dadadd] bg-white">
                </div>
                <p class="mt-4 ml-2 leading-[18px]">You can type ${abc} as a parameter,abc is the parameter name,<br>${today}or ${A1} as a formula.For example"${p},mike"</p>
            </div>
        </fieldset>
        <div class="mt-2 flex justify-end gap-2.5 pr-[14px]">
            <button class="h-5 w-[37px] border border-[#dcdcdf] bg-white"><u>O</u>K</button>
            <button class="h-5 w-[59px] border border-[#dcdcdf] bg-white"><u>C</u>ancel</button>
        </div>
        <div class="absolute top-[56px] left-[251px] h-[27px] w-[138px] border-3 border-[#fc3838]"></div>
        <div class="absolute top-[86px] left-[303px] flex size-[30px] items-center justify-center rounded-full bg-[#fc3838] font-['Open_Sans',sans-serif] text-[20px] text-white">6</div>
    </div>

    <!-- Template menu -->
    <div class="absolute top-7 left-[43px] h-[526px] w-[297px] border border-white bg-[#e0e0e2] pt-0.5 pr-1.5 shadow-[0_2px_8px_rgba(0,0,0,0.5)]">
        <ul id="menu"></ul>
        <div class="absolute -top-[26px] left-[11px] h-6 w-[68px] border-3 border-[#fc3838]"></div>
        <div class="absolute -top-[5px] left-6 flex size-[30px] items-center justify-center rounded-full bg-[#fc3838] font-['Open_Sans',sans-serif] text-[20px] text-white">1</div>
        <div class="absolute top-[41px] left-1 h-[33px] w-[133px] border-3 border-[#fc3838]"></div>
        <div class="absolute top-[77px] left-[50px] flex size-[30px] items-center justify-center rounded-full bg-[#fc3838] font-['Open_Sans',sans-serif] text-[20px] text-white">2</div>
    </div>

    <script>
        const icon = (id, cls = 'size-4 shrink-0') => `<svg class="${cls}"><use href="#${id}"/></svg>`;

        // Template menu: [icon, label], a plain string is a section title, null a separator
        const menu = [
            'Workbook',
            ['db', 'Template Dataset(D)...'], ['globe-gear', 'Web Attribute(W)...'], ['export', 'Export Attribute(E)...'],
            ['param', 'Template Parameter(A)...'], ['adapt', 'PC Adaptation Attribute(T)...'], ['mobile', 'Mobile Attribute(P)...'],
            ['print', 'Print Setting(P)...'], ['stamp', 'Watermark(M)...'], ['i18n', 'Template Internationalization(i18n)(I)...'],
            'Current Sheet',
            ['page', 'Page Setting(U)...'], ['head', 'Report Header(H)...'], ['foot', 'Report Footer(F)...'], ['bgimg', 'Report Background(B)...'],
            null,
            ['fill-attr', 'Report Filling Attribute(R)...'], ['split', 'Report Split by Column/Row(C)...'],
            ['freeze', 'Repeat/Freeze(G)...'], ['engine', 'Report Engine Attribute(E)...'],
            'Permission Edit',
            ['perm', 'Enter Edit Permission'],
            'Search/Replacement',
            ['search-rep', 'Global Search and Replacement', 'Ctrl-F'],
        ];
        document.getElementById('menu').innerHTML = menu.map(m => {
            if (m === null) return '<li class="mr-1 ml-8 flex h-2 items-center"><span class="w-full border-t border-dashed border-[#999]"></span></li>';
            if (typeof m === 'string') return `<li class="mr-1 flex h-5 items-center gap-1 pt-0.5 pl-1.5 text-[#444]">${m}<span class="mt-1 h-px flex-1 bg-[#333]"></span></li>`;
            const active = m[0] === 'globe-gear';
            return `<li class="flex items-center pl-2.5 text-[#333]">${icon(m[0])}
                <button class="${active ? 'ml-1.5 flex h-[23px] flex-1 items-center rounded-sm bg-[#419bf9] pl-px text-white' : 'ml-1.5 flex h-[23px] flex-1 items-center pl-px text-black'}">${m[1]}${m[2] ? `<span class="mr-4 ml-auto text-[10px]">${m[2]}</span>` : ''}</button></li>`;
        }).join('');

        // Template tree
        let tree = `<li class="flex h-5 items-center gap-3 pl-[5px]">${icon('tri-right', 'h-2 w-1.5')}${icon('folder', 'h-3.5 w-4')}<span class="-ml-1.5">demo</span></li>
            <li class="flex h-5 items-center gap-[11px] pl-1">${icon('tri-down', 'h-[5px] w-2 text-[#aaa]')}${icon('folder', 'h-3.5 w-4')}<span class="-ml-1.5">doc</span></li>`;
        for (let i = 0; i < 12; i++) tree += `<li class="flex h-5 items-center gap-2.5 pl-[25px]">${icon('tri-right', 'h-2 w-1.5')}${icon('folder', 'h-3.5 w-4')}</li>`;
        document.getElementById('tree').innerHTML = tree;

        // Toolbar button table
        const tools = [
            ['save', 'Submit', 'word', 'Word', 'insert', 'I'],
            ['validate', 'Data Validation', 'print', 'Print', 'delete', 'D'],
            ['mail', 'Email', 'print', 'Printing (Compatible)', 'move', 'F'],
            ['export', 'Export', 'flash', 'Print[Client]', 'gear', 'C'],
            ['pdf', 'PDF', 'java', 'Applet Print', 'save-clock', 'S'],
            ['excel', 'Excel (Export by Page)', 'pdf-print', 'Print[Client]', 'eraser', 'C'],
            ['excel', 'Excel (Unaltered Export)', 'excel', 'Import Excel Data', 'excel', 'C'],
            ['excel', 'Excel (Page to Sheet)', 'window', 'Show Cell Value', 'excel', 'M'],
        ];
        document.getElementById('tools').innerHTML = tools.map(t => '<tr>' + [0, 2, 4].map(i =>
            `<td class="${i < 4 ? 'h-5 border-r border-b border-[#d0d0d0] p-0 pl-px' : 'h-5 border-b border-[#d0d0d0] p-0 pl-px'}"><div class="flex items-center gap-1">${icon(t[i], 'size-4 shrink-0 text-[#999]')}<span>${t[i + 1]}</span></div></td>`).join('') + '</tr>').join('');

        // Sheet: header row, three tall rows, then rows 4 to 19
        let rows = '<tr><td class="h-[23px] border-r border-b border-[#ccc] bg-[#e4e4e4]"></td><td class="border-r border-b border-[#bbb] bg-[#cdeffb]"></td>'
            + '<td class="border-r border-b border-[#bbb] bg-[#e4e4e4]"></td>'.repeat(8) + '</tr>';
        const cell = '<td class="border-r border-b border-[#bbb]"></td>';
        const num = n => `<td class="border-r border-b border-r-[#bbb] border-b-[#ddd] p-0 pb-0.5 text-[13px] leading-4">${n}</td>`;
        rows += '<tr class="h-7">' + num(1) + cell.repeat(9) + '</tr>';
        const head = t => `<td class="border-t border-b border-[#90c8ff] bg-[#e4e7f0] p-0 pl-[22px] text-left font-['Liberation_Serif',serif] text-base">${t}</td>`;
        rows += '<tr class="h-[45px]">' + num(2) + '<td class="border-3 border-[#2f86f5]"></td>' + head('Product') + head('').repeat(4)
            + `<td class="border-t border-b border-[#90c8ff] bg-[#e4e7f0] p-0 pl-[23px] text-left font-['Liberation_Serif',serif] text-base">Unit</td>` + head('').repeat(2) + '</tr>';
        rows += '<tr class="h-12">' + num(3) + '<td class="border-r border-b border-r-[#90c8ff] border-b-[#bbb]"></td><td class="border-b border-[#90c8ff] p-0 pt-6 pl-[21px] text-left text-base leading-5">Pro</td>'
            + '<td class="border-b border-[#90c8ff]"></td>'.repeat(4) + '<td class="border-b border-[#90c8ff] p-0 pb-4 pl-[21px] text-left text-base leading-5 font-bold">ds1</td>' + '<td class="border-b border-[#90c8ff]"></td>'.repeat(2) + '</tr>';
        for (let n = 4; n <= 19; n++) {
            rows += `<tr class="${n % 2 ? 'h-7' : 'h-[29px]'}">` + num(n) + cell.repeat(6)
                + '<td class="border-r border-b border-r-black border-b-[#bbb] [border-right-style:dashed]"></td>' + cell.repeat(2) + '</tr>';
        }
        document.getElementById('sheet').innerHTML = rows;
    </script>
</body>
</html>
